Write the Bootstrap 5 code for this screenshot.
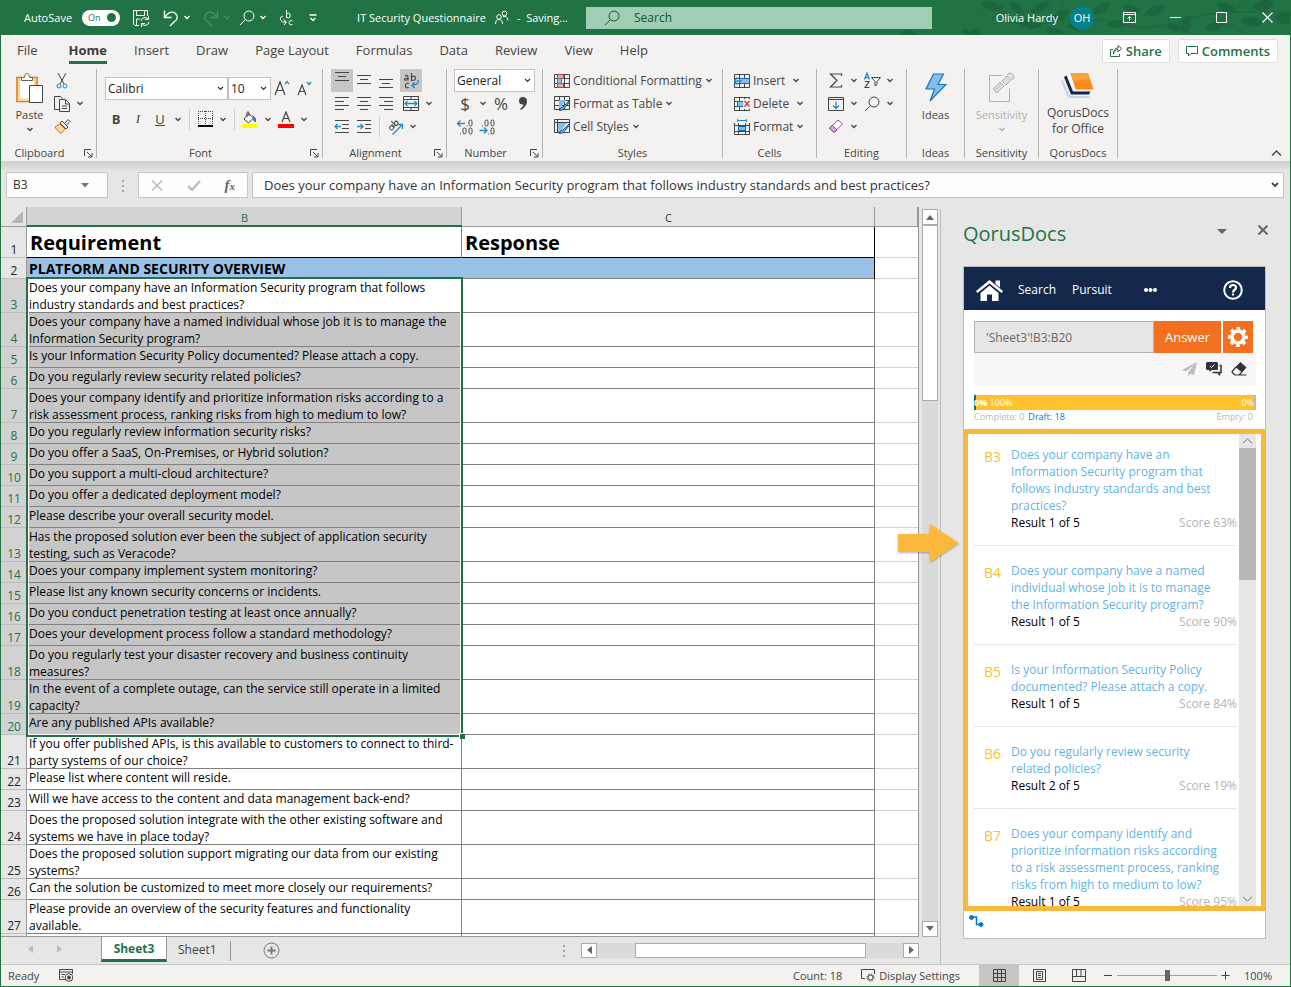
<!DOCTYPE html>
<html lang="en">
<head>
<meta charset="utf-8">
<meta name="viewport" content="width=device-width, initial-scale=1">
<title>IT Security Questionnaire</title>
<link href="https://cdn.jsdelivr.net/npm/bootstrap@5.3.0/dist/css/bootstrap.min.css" rel="stylesheet">
<style>
:root{--xl:#217346;--ink:#444;--ribbon:#f3f2f1;--chrome:#e6e6e6;--line:#808080}
body{font-family:"Open Sans","Noto Sans",sans-serif;font-size:12px;line-height:16px;color:var(--ink);background:var(--chrome)}
button{background:none;border:0;padding:0;color:inherit;font:inherit;line-height:inherit}
svg{display:block;flex:none;fill:none;stroke:currentColor}
svg.solid,.sb svg{fill:currentColor;stroke:none}
svg.flat{stroke:none}
.app{border:1px solid var(--xl);border-top:0}
.titlebar{height:35px;background:var(--xl);color:#fff;font-size:11px}
.titlebar .leaves{top:0;right:0}
.title-left{width:585px;padding-left:23px}
.title-right{width:358px}
.toggle{width:38px;height:16px;border-radius:8px;background:#fff;color:var(--xl);font-size:9px;padding:0 4px 0 6px}
.toggle i{width:9px;height:9px;border-radius:50%;background:var(--xl)}
.chev{width:14px}
.gap-s{margin-left:12px}
.searchbox{height:22px;background:#a0cdb4;color:#0f5a2e;gap:12px}
.searchbox input{background:none;border:0;outline:0;color:inherit;font-size:12px;width:100%;padding:0}
.searchbox input::placeholder{color:#0f5a2e;opacity:1}
.avatar{width:24px;height:24px;border-radius:50%;background:#038387}
.winbtn{width:46px;height:35px}
.ribbon{background:var(--ribbon)}
.tabs{height:32px;padding:0 12px 0 16px;font-size:13px}
.tabs nav{gap:27px}
.tabs nav a{color:var(--ink);text-decoration:none;line-height:22px;border-bottom:3px solid transparent;border-top:1px solid transparent}
.tabs nav a.on{font-weight:700;border-bottom-color:var(--xl);color:#3b3b3b}
.tabs .pill{height:24px;background:#fff;border:1px solid #e1dfdd;border-radius:2px;color:var(--xl);font-weight:600;padding:0 7px;gap:4px}
.groups{height:94px;padding-top:2px}
.grp{height:89px;border-right:1px solid #b5b3b1}
.grp-body{height:69px}
.grp-name{height:12px;line-height:16px;margin-top:7px;font-size:11px;text-align:center;position:relative}
.grp-name.more{padding-right:18px}
.grp-name svg{position:absolute;right:3px;top:4px}
.rw{height:23px;display:flex;align-items:center}
.ib{width:22px;height:23px;display:flex;align-items:center;justify-content:center}
.ib.on{background:#c8c6c4}
.vsep{width:1px;height:21px;background:#d2d0ce}
.combo{appearance:none;height:23px;border:1px solid #c3c1bf;border-radius:0;padding:0 0 0 2px;color:#222;font-size:12px;background:#fff url("data:image/svg+xml,%3Csvg xmlns='http://www.w3.org/2000/svg' width='7' height='5'%3E%3Cpath d='M1 1l2.500 2.500L6 1' fill='none' stroke='%23333' stroke-width='1.200'/%3E%3C/svg%3E") no-repeat right 3px center}
.cmd{display:flex;align-items:center;gap:3px}
.big{display:flex;flex-direction:column;align-items:center}
.fbar{height:47px;padding:11px 6px 0 5px;background:linear-gradient(#cdcdcd,#e6e6e6 11px)}
.fbox{height:26px;background:#fdfdfd;border:1px solid #c6c6c6}
.fbox input{background:none;border:0;outline:0;color:#333;padding:0;min-width:0}
.main{min-height:0}
.sheet{color:#000}
.gridwrap{border-right:1px solid #999;border-bottom:1px solid #999;background:#fff;overflow:hidden}
.grid{table-layout:fixed;width:100%;border-collapse:separate;border-spacing:0;line-height:17px}
.grid th,.grid td{padding:0;vertical-align:top;white-space:nowrap}
.grid td{padding-left:2px;box-shadow:inset -1px -1px var(--line);height:21px}
.grid td:last-child{box-shadow:inset 0 -1px #d4d4d4}
.grid tbody th{background:var(--chrome);font-weight:400;color:#222;vertical-align:bottom;text-align:center;box-shadow:inset -1px 0 #999,inset 0 -1px #bdbdbd}
.grid thead th{height:20px;background:var(--chrome);font-weight:400;text-align:center;vertical-align:middle;box-shadow:inset -1px -1px #999;color:#333;font-size:11px}
.grid thead th.hot{background:#d2d2d2;color:var(--xl);box-shadow:inset 0 -2px var(--xl),inset -1px 0 #999}
.grid tr.r1 td{height:31px;line-height:31px;font-size:20px;font-weight:700;padding-left:3px;box-shadow:inset -1px 0 var(--line),inset 0 -1px #000}
.grid tr.r1 td:nth-child(3){box-shadow:inset -1px -1px #000}
.grid tr.r1 td:last-child{box-shadow:inset 0 -1px #d4d4d4}
.grid tr.r2 td{font-size:14px;font-weight:700;line-height:21px}
.grid tr.r2 td:not(:last-child){background:#9bc2e6;box-shadow:inset 0 -1px var(--line)}
.grid tr.r2 td:nth-child(3){box-shadow:inset -1px 0 #000,inset 0 -1px var(--line)}
.picked{position:relative}
.grid .picked th{background:#d2d2d2;color:var(--xl)}
.picked td:nth-child(2){background:#c6c6c6}
.picked tr:first-child td:nth-child(2){background:#fff}
.frame{position:absolute;left:25px;top:-2px;bottom:-2px;width:437px;border:2px solid var(--xl);box-shadow:inset 0 0 0 1px #fff;pointer-events:none}
.frame::after{content:"";position:absolute;right:-4px;bottom:-4px;width:6px;height:6px;background:var(--xl);border:1px solid #fff;border-width:1px 0 0 1px}
.track{background:#dadada}
.sb{width:16px;height:16px;background:#fff;border:1px solid #ababab;color:#666;display:flex;align-items:center;justify-content:center;flex:none}
.thumb{background:#fff;border:1px solid #ababab}
.vbar{width:16px;margin:2px 2px 0 3px}
.sheettabs{height:28px}
.stab{width:66px;height:25px;background:#fff;border:1px solid #999;border-width:0 1px 0 1px;border-bottom:3px solid var(--xl);color:var(--xl);font-weight:700;line-height:24px}
.hbar{width:338px;height:15px;margin:6px 21px 0 0}
.pane{width:350px;border-left:1px solid #bdbdbd;margin-top:2px;padding:0 24px 25px 22px}
.pane h1{font-size:20px;line-height:26px;font-weight:400;color:var(--xl);margin:0}
.pane-head{height:57px;padding-top:12px}
.panel{background:#fff;border:1px solid #bdbdbd}
.pnav{height:43px;background:#14284b;color:#fff;padding:3px 22px 0 12px}
.pnav a{color:#fff;text-decoration:none}
.query{padding:11px 12px 0 10px}
.query input{height:32px;border:1px solid #b3b3b3;background:#e6e6e6;color:#666;padding:0 0 0 11px;border-radius:0;min-width:0}
.hot-btn{height:32px;background:#f37021;color:#fff;font-size:13px}
.tools{height:32px;background:#f7f7f7;margin:0 9px 0 10px;padding-right:9px;gap:9px;color:#333}
.meter{height:15px;margin:10px 9px 0 10px;background:#ffc22d;border-left:2px solid var(--xl);border-right:2px solid #bbb;color:#fff;font-size:9px;line-height:15px}
.legend{margin:0 12px 0 10px;font-size:9px;line-height:14px;color:#b9b9b9;height:19px}
.results{border:5px solid #fbb83c;margin:0 -1px;height:482px;padding-left:6px;padding-right:5px}
.hits{overflow:hidden;padding-right:2px}
.hit{border-bottom:1px solid #e6e6e6;padding:16px 0 14px 10px;line-height:17px;display:flex}
.hit:first-child{padding-top:12px}
.hit b{font-weight:400;font-size:14px;color:#fdc02f;width:27px;line-height:21px;flex:none}
.hit a{color:#5fb4e5;text-decoration:none;display:block;white-space:nowrap}
.hit .fine{color:#000}
.hit .fine span:last-child{color:#b3b3b3}
.rail{width:17px;background:#e6e6e6;color:#777}
.rail .grab{height:132px;background:#b8b8b8}
.pane-foot{height:25px;padding:4px 0 0 5px;color:#0078d7}
.status{height:22px;background:var(--ribbon);border-top:1px solid #c6c6c6;font-size:11px}
.view{width:40px;height:21px;display:flex;align-items:center;justify-content:center}
.view.on{background:#c8c6c4}
.zoomer{appearance:none;width:100px;height:11px;margin:0;background:linear-gradient(#a19f9d,#a19f9d) center/100% 1px no-repeat}
.zoomer::-webkit-slider-thumb{appearance:none;width:5px;height:11px;background:#666}
.arrow{left:896px;top:522px;z-index:5;filter:drop-shadow(0 1px 1px rgba(0,0,0,.3))}
.faded{color:#b1afad}
</style>
</head>
<body>
<svg width="0" height="0" class="position-absolute" aria-hidden="true">
<symbol id="cv" viewBox="0 0 8 5"><path d="M1.500 1L4 3.500L6.500 1" stroke-width="1.300"/></symbol>
<symbol id="ln" viewBox="0 0 9 9"><path d="M.5 7V.5H7M3 3l4.500 4.500M8 4v4H4"/></symbol>
<symbol id="mg" viewBox="0 0 18 18"><circle cx="11" cy="7" r="5"/><path d="M7.500 10.500L2 16"/></symbol>
<symbol id="tb" viewBox="0 0 16 14"><path d="M.5.5h15v13H.5zM.5 4.500h15M.5 9.500h15M5.500.5v13M10.500.5v13"/></symbol>
</svg>
<div class="app d-flex flex-column vh-100 position-relative overflow-hidden">

<header class="titlebar d-flex align-items-center position-relative">
  <svg class="leaves position-absolute" width="430" height="35" viewBox="0 0 430 35" style="color:#1d6540"><g fill="currentColor" stroke="none"><path d="M120 3q14-6 24 6q-14 6-24-6zM150 1q14 2 14 14q-14-2-14-14zM170 12q8-12 20-10q-6 14-20 10zM158 22q14-6 24 4q-12 8-24-4zM190 20q6-12 20-10q-4 14-20 10zM186 28q14-2 20 6h-16zM206 26q14-8 24 0q-10 10-24 0zM232 14q4-12 18-12q-4 14-18 12zM246 24q12-8 22 0q-10 8-22 0zM112 28q8 0 8 7h-10zM102 30q6-4 10 4h-10zM284 14q10-12 22-8q-6 14-22 8zM262 6q12-4 18 6q-12 4-18-6zM330 14q4 14-6 20q-8-12 6-20zM344 28q10-10 20-4q-6 12-20 4zM356 4q14-4 22 8q-16 4-22-8zM380 20q14-8 24 2q-12 10-24-2zM392 8q8-12 22-6q-6 14-22 6zM306 24q10-4 16 6q-12 4-16-6zM414 16q8-6 16-2v10q-12 2-16-8zM40 33q10-8 16 2h-14z"/></g><path d="M118 12q40 18 76 10t70 4q40 4 60-6t104-8M190 22q10-10 14-20M262 25q14-10 20-18M350 18q20 6 36 16M370 15q10-8 14-14"/></svg>
  <div class="title-left d-flex align-items-center position-relative">
    <span style="width:50px">AutoSave</span>
    <button class="toggle d-flex align-items-center justify-content-between ms-2" aria-label="AutoSave on">On<i></i></button>
    <button class="gap-s" aria-label="Save"><svg width="18" height="18" viewBox="0 0 18 18"><path d="M7 16.500H3L1.500 15V1.500h14V7M4.500 1.500v5h8v-5M4.500 16v-6H8M9 12a4 4 0 0 1 7-2M16.500 7v3.500H13M17 13a4 4 0 0 1-7 2M9.500 18v-3.500H13"/></svg></button>
    <button class="gap-s" aria-label="Undo"><svg width="18" height="18" viewBox="0 0 18 18"><path d="M2.500 1.500v7h7M3 8q5-7 10-4q5 5-1 9l-4 4" stroke-width="1.400"/></svg></button>
    <svg class="chev" height="5"><use href="#cv"/></svg>
    <button class="ms-2" aria-label="Redo" style="color:#4c8f69"><svg width="18" height="18" viewBox="0 0 18 18"><path d="M15.500 1.500v7h-7M15 8q-5-7-10-4q-5 5 1 9l4 4" stroke-width="1.400"/></svg></button>
    <svg class="chev" height="5" style="color:#4c8f69"><use href="#cv"/></svg>
    <button class="ms-1" aria-label="Find"><svg width="18" height="18"><use href="#mg"/></svg></button>
    <svg class="chev" height="5"><use href="#cv"/></svg>
    <button class="ms-2" aria-label="Replace"><svg width="18" height="18" viewBox="0 0 18 18"><path d="M8.500 1v8M8.500 5q2-2 3.500 0v3q-1.500 2-3.500 0M14.500 12q-3-1.500-3.500 1.500q.5 3.500 3.500 2M5 7q-4 1-2.500 4T8 13M5.500 10.500L8.500 13L6 16"/></svg></button>
    <button class="gap-s" aria-label="Customize toolbar"><svg width="10" height="8" viewBox="0 0 10 8"><path d="M1.500 1h7M2.500 4L5 6.500L7.500 4" stroke-width="1.300"/></svg></button>
    <span class="text-nowrap ms-auto">IT Security Questionnaire</span>
    <svg class="ms-2" width="15" height="15" viewBox="0 0 15 15"><circle cx="5" cy="7" r="2.300"/><path d="M1.500 14q0-4.500 3.500-4.500T8.500 14"/><circle cx="10.500" cy="3.500" r="2.300"/><path d="M9 6.500q4.500-1 5 4"/></svg>
    <span class="text-nowrap ms-2" style="margin-right:18px">-&nbsp; Saving...</span>
  </div>
  <label class="searchbox d-flex align-items-center flex-grow-1 position-relative px-3">
    <svg width="20" height="18"><use href="#mg"/></svg><input type="text" placeholder="Search" aria-label="Search">
  </label>
  <div class="title-right d-flex align-items-center justify-content-end position-relative">
    <span>Olivia Hardy</span>
    <span class="avatar gap-s d-flex align-items-center justify-content-center">OH</span>
    <button class="winbtn gap-s d-flex align-items-center justify-content-center" aria-label="Ribbon display options"><svg width="13" height="11" viewBox="0 0 13 11"><path d="M.5.5h12v10H.5zM.5 2.500h12M6.500 9V4.500M4.500 6.500l2-2l2 2"/></svg></button>
    <button class="winbtn d-flex align-items-center justify-content-center" aria-label="Minimize"><svg width="11" height="11"><path d="M0 5.500h11"/></svg></button>
    <button class="winbtn d-flex align-items-center justify-content-center" aria-label="Maximize"><svg width="11" height="11"><path d="M.5.5h10v10H.5z"/></svg></button>
    <button class="winbtn d-flex align-items-center justify-content-center" aria-label="Close"><svg width="11" height="11"><path d="M.5.5l10 10M10.500.5l-10 10" stroke-width="1.200"/></svg></button>
  </div>
</header>

<section class="ribbon">
  <div class="tabs d-flex align-items-center justify-content-between">
    <nav class="d-flex" aria-label="Ribbon tabs"><a href="#">File</a><a href="#" class="on ms-1">Home</a><a href="#">Insert</a><a href="#">Draw</a><a href="#">Page Layout</a><a href="#">Formulas</a><a href="#">Data</a><a href="#">Review</a><a href="#">View</a><a href="#">Help</a></nav>
    <div class="d-flex gap-2">
      <button class="pill d-flex align-items-center"><svg width="12" height="12" viewBox="0 0 12 12"><path d="M3 4.500H.5v7h9V9M3.500 9Q4 4.500 8 4.500V7l3.500-3.500L8 .5V3Q3.500 3 3.500 9z"/></svg>Share</button>
      <button class="pill d-flex align-items-center"><svg width="12" height="12" viewBox="0 0 12 12"><path d="M.5 1.500h11v7H5L2.500 11V8.500h-2z"/></svg>Comments</button>
    </div>
  </div>

  <div class="groups d-flex">
    <div class="grp" style="width:96px">
      <div class="grp-body d-flex">
        <button class="big" style="width:57px;padding-top:4px"><svg width="28" height="30" viewBox="0 0 28 30"><path d="M1 4.500h20v24H1z" fill="#fff" stroke="#dd7410" stroke-width="1.500"/><path d="M3 6.500h16v20H3z" stroke="#f8d68d" stroke-width="2"/><path d="M5.500 7.500V4.500h3q0-4 2.500-4t2.500 4h3v3z" fill="#fff" stroke="#666"/><path d="M13.500 12.500h13v17h-13z" fill="#fff" stroke="#444"/></svg><span class="mt-1 text-center" style="font-size:11px">Paste</span><svg class="mt-1" width="8" height="5"><use href="#cv"/></svg></button>
        <div style="margin-left:-7px">
          <button class="rw ib" aria-label="Cut"><svg width="12" height="16" viewBox="0 0 12 16"><path d="M2 0l6 11M10 0L4 11"/><circle cx="3" cy="13" r="2" stroke="#2488c9"/><circle cx="9" cy="13" r="2" stroke="#2488c9"/></svg></button>
          <div class="rw"><button class="ib" aria-label="Copy"><svg width="16" height="16" viewBox="0 0 16 16"><path d="M5 13.500H.5V.5h6l2 2M5.500 3.500h6l4 4v8h-10zM11.500 4v4h4M8 10h5M8 12.500h5"/></svg></button><svg class="chev" height="5"><use href="#cv"/></svg></div>
          <button class="rw ib" aria-label="Format painter"><svg width="17" height="15" viewBox="0 0 17 15"><path d="M1 8l5-3l5 5l-4 4.500q-2-1-3-3q-2-1-3-3.500z" fill="#fbd9a6" stroke="#dd7410"/><path d="M6 4l2-2l6 6l-2 2zM11 4l3-3.500l2 2L12.500 6" fill="#fff"/></svg></button>
        </div>
      </div>
      <div class="grp-name more">Clipboard<svg width="9" height="9"><use href="#ln"/></svg></div>
    </div>

    <div class="grp" style="width:226px">
      <div class="grp-body" style="padding:8px 0 0 8px">
        <div class="rw"><select class="combo" aria-label="Font" style="width:123px"><option>Calibri</option></select><select class="combo" aria-label="Font size" style="width:43px"><option>10</option></select>
          <button class="ib" aria-label="Grow font"><svg width="16" height="18" viewBox="0 0 16 18"><path d="M1 15L6 2l5 13M3 10.500h6" stroke-width="1.200"/><path d="M11 4l2-2.500L15 4" stroke="#2488c9" stroke-width="1.300"/></svg></button>
          <button class="ib" aria-label="Shrink font"><svg width="16" height="18" viewBox="0 0 16 18"><path d="M2 15L6 5l4 10M3.500 11.500h5" stroke-width="1.200"/><path d="M11 2l2 2.500L15 2" stroke="#2488c9" stroke-width="1.300"/></svg></button></div>
        <div class="d-flex align-items-center" style="height:30px;margin-top:4px;font-size:13px">
          <button class="ib"><strong>B</strong></button><button class="ib" style="font-family:'Liberation Serif',serif"><em>I</em></button><button class="ib"><u>U</u></button><svg class="chev" height="5"><use href="#cv"/></svg>
          <span class="vsep mx-1"></span>
          <button class="ib" aria-label="Borders"><svg width="15" height="16" viewBox="0 0 15 16"><path d="M.5 0v14M7.500 0v14M14.500 0v14M0 .5h15M0 7.500h15" stroke-dasharray="1 1"/><path d="M0 15h15" stroke="#000" stroke-width="2"/></svg></button><svg class="chev" height="5"><use href="#cv"/></svg>
          <span class="vsep ms-1"></span>
          <button class="ib ms-1" aria-label="Fill color"><svg width="16" height="17" viewBox="0 0 16 17"><path d="M6.500 2.500l5 4.500l-5 5L2 8zM5 6V1.500q1-1.500 2 0V5"/><path d="M11 5q3 1 2.500 6q-2-1-2-4" fill="#2a6fa8" stroke="#2a6fa8"/><path d="M0 15h16" stroke="#ff0" stroke-width="4"/></svg></button><svg class="chev" height="5"><use href="#cv"/></svg>
          <button class="ib" aria-label="Font color"><svg width="16" height="17" viewBox="0 0 16 17"><path d="M4 11L8 1l4 10M5.500 7.500h5" stroke-width="1.200"/><path d="M0 15h16" stroke="red" stroke-width="4"/></svg></button><svg class="chev" height="5"><use href="#cv"/></svg>
        </div>
      </div>
      <div class="grp-name more">Font<svg width="9" height="9"><use href="#ln"/></svg></div>
    </div>

    <div class="grp" style="width:124px">
      <div class="grp-body" style="padding-left:8px">
        <div class="rw"><button class="ib on" aria-label="Top align"><svg width="16" height="19"><path d="M1 1.500h14M4 5.500h8M1 9.500h14"/></svg></button><button class="ib" aria-label="Middle align"><svg width="16" height="19"><path d="M1 4.500h14M4 8.500h8M1 12.500h14"/></svg></button><button class="ib" aria-label="Bottom align"><svg width="16" height="19"><path d="M1 8.500h14M4 12.500h8M1 16.500h14"/></svg></button>
          <button class="ib on" aria-label="Wrap text" style="margin-left:3px"><svg width="16" height="18" viewBox="0 0 16 18"><path d="M2 4q3-1.500 3 1v3.500M5 6Q1.500 6 1.500 7.500T5 7.500M8.500 1v8M8.500 5q4-2 4 1t-4 2M6 11.500q-3-1-3.500 2t3.500 2" stroke-width="1.200"/><path d="M15 8q1 5-6 5M11.500 10.500L9 13l2.500 3" stroke="#2488c9" stroke-width="1.500"/></svg></button></div>
        <div class="rw"><button class="ib" aria-label="Align left"><svg width="16" height="15"><path d="M1 1.500h14M1 5.500h9M1 9.500h14M1 13.500h9"/></svg></button><button class="ib" aria-label="Center"><svg width="16" height="15"><path d="M1 1.500h14M4 5.500h8M1 9.500h14M4 13.500h8"/></svg></button><button class="ib" aria-label="Align right"><svg width="16" height="15"><path d="M1 1.500h14M6 5.500h9M1 9.500h14M6 13.500h9"/></svg></button>
          <button class="ib" aria-label="Merge and center" style="margin-left:3px"><svg width="16" height="15" viewBox="0 0 16 15"><path d="M.5.5h15v14H.5zM.5 3.500h15M.5 11.500h15M8 .5v3M8 11.500v3"/><path d="M2 7.500h12M4.500 5L2 7.500L4.500 10M11.500 5L14 7.500L11.500 10" stroke="#2488c9" stroke-width="1.300"/></svg></button><svg class="chev" height="5"><use href="#cv"/></svg></div>
        <div class="rw"><button class="ib" aria-label="Decrease indent"><svg width="16" height="13" viewBox="0 0 16 13"><path d="M1 .5h14M8 4.500h7M8 8.500h7M1 12.500h14"/><path d="M1 6.500h6M3.500 4L1 6.500L3.500 9" stroke="#2488c9" stroke-width="1.300"/></svg></button><button class="ib" aria-label="Increase indent"><svg width="16" height="13" viewBox="0 0 16 13"><path d="M1 .5h14M9 4.500h6M9 8.500h6M1 12.500h14"/><path d="M1 6.500h6M4.500 4L7 6.500L4.500 9" stroke="#2488c9" stroke-width="1.300"/></svg></button><span class="vsep mx-1"></span><button class="ib" aria-label="Orientation"><svg width="17" height="16" viewBox="0 0 17 16"><g transform="rotate(-45 6 6)"><circle cx="3" cy="7" r="2"/><path d="M5.500 4.500V9M7.500 2v7"/><circle cx="9.500" cy="7" r="2"/></g><path d="M5.500 15.500L15 6M11 5.500h4.500V10" stroke="#2488c9" stroke-width="1.300"/></svg></button><svg class="chev" height="5"><use href="#cv"/></svg></div>
      </div>
      <div class="grp-name more">Alignment<svg width="9" height="9"><use href="#ln"/></svg></div>
    </div>

    <div class="grp" style="width:96px">
      <div class="grp-body" style="padding-left:7px">
        <div class="rw"><select class="combo" aria-label="Number format" style="width:81px"><option>General</option></select></div>
        <div class="rw" style="font-size:17px"><button class="ib">$</button><svg class="chev" height="5"><use href="#cv"/></svg><button class="ib">%</button><button class="ib" aria-label="Comma style"><svg class="solid" width="10" height="15" viewBox="0 0 10 15"><path d="M5 1q4 0 4 4.500T3 14l-1-1q3-2 3.500-4.500Q1 9 1 5t4-4z"/></svg></button></div>
        <div class="rw"><button class="ib" aria-label="Increase decimal"><svg width="16" height="16" viewBox="0 0 16 16"><path d="M.5 4.500H8M3.500 1.500l-3 3l3 3" stroke="#2488c9" stroke-width="1.300"/><rect x="12" y="1" width="3" height="6" rx="1.500"/><rect x="6" y="9" width="3" height="6" rx="1.500"/><rect x="12" y="9" width="3" height="6" rx="1.500"/><path d="M9.500 7h1M3 15h1"/></svg></button><button class="ib" aria-label="Decrease decimal"><svg width="16" height="16" viewBox="0 0 16 16"><path d="M.5 11.500H8M5 8.500l3 3l-3 3" stroke="#2488c9" stroke-width="1.300"/><rect x="6" y="1" width="3" height="6" rx="1.500"/><rect x="12" y="1" width="3" height="6" rx="1.500"/><rect x="12" y="9" width="3" height="6" rx="1.500"/><path d="M3 7h1M9.500 15h1"/></svg></button></div>
      </div>
      <div class="grp-name more">Number<svg width="9" height="9"><use href="#ln"/></svg></div>
    </div>

    <div class="grp" style="width:180px">
      <div class="grp-body" style="padding-left:11px">
        <div class="rw"><button class="cmd"><svg width="16" height="14" viewBox="0 0 16 14"><use href="#tb" width="16" height="14"/><path d="M3.500.5h6v4h-6zM3.500 9.500h6v4h-6z" fill="#f4a6a6" stroke="#d13438"/><path d="M3.500 4.500h4v5h-4z" fill="#83beec" stroke="#2488c9"/></svg>Conditional Formatting<svg width="8" height="5"><use href="#cv"/></svg></button></div>
        <div class="rw"><button class="cmd"><svg width="16" height="15" viewBox="0 0 16 15"><use href="#tb" width="16" height="14"/><path d="M5 4h7L6 12H5z" fill="#83beec" stroke="none"/><path d="M15.500 4.500L9 11q-3 0-3.500 3.500q4 0 5-2.500l5-6z" fill="#83beec" stroke="#0f4c81"/></svg>Format as Table<svg width="8" height="5"><use href="#cv"/></svg></button></div>
        <div class="rw"><button class="cmd"><svg width="16" height="15" viewBox="0 0 16 15"><path d="M.5.5h15v13H.5zM.5 3.500h15M3.500.5v13"/><path d="M4 4h9l-7 9H4z" fill="#83beec" stroke="none"/><path d="M15.500 4.500L9 11q-3 0-3.500 3.500q4 0 5-2.500l5-6z" fill="#83beec" stroke="#0f4c81"/></svg>Cell Styles<svg width="8" height="5"><use href="#cv"/></svg></button></div>
      </div>
      <div class="grp-name">Styles</div>
    </div>

    <div class="grp" style="width:94px">
      <div class="grp-body" style="padding-left:11px">
        <div class="rw"><button class="cmd"><svg width="16" height="14" viewBox="0 0 16 14"><use href="#tb" width="16" height="14"/><path d="M5.500 4.500h10v5h-10z" fill="#83beec" stroke="#0f6cbd"/><path d="M0 7h8M3.500 3.500L0 7l3.500 3.500" stroke="#2488c9" stroke-width="1.500"/></svg>Insert<svg class="ms-1" width="8" height="5"><use href="#cv"/></svg></button></div>
        <div class="rw"><button class="cmd"><svg width="16" height="14" viewBox="0 0 16 14"><use href="#tb" width="16" height="14"/><path d="M3.500 4.500h6v5h-6z" fill="#83beec" stroke="#0f6cbd"/><path d="M9 2h7v10H9z" fill="#f3f2f1" stroke="none"/><path d="M10.500 4l5 5.500M15.500 4l-5 5.500" stroke="#d13438" stroke-width="1.300"/></svg>Delete<svg class="ms-1" width="8" height="5"><use href="#cv"/></svg></button></div>
        <div class="rw"><button class="cmd"><svg width="16" height="16" viewBox="0 0 16 16"><path d="M.5 4v11.500h15V4M.5 6.500h15M.5 12.500h15M4.500 4v11.500M11.500 4v11.500"/><path d="M4.500 7.500h7v4h-7z" fill="#83beec" stroke="#0f6cbd"/><path d="M3 1.500h10M3.500 0v3M12.500 0v3" stroke="#2488c9"/></svg>Format<svg width="8" height="5"><use href="#cv"/></svg></button></div>
      </div>
      <div class="grp-name">Cells</div>
    </div>

    <div class="grp" style="width:90px">
      <div class="grp-body" style="padding-left:8px">
        <div class="rw"><button class="ib" aria-label="AutoSum"><svg width="14" height="15" viewBox="0 0 14 15"><path d="M12.500 3V1H1.500L8 7.500L1.500 14h11v-2" stroke-width="1.200"/></svg></button><svg class="chev" height="5"><use href="#cv"/></svg><button class="ib" aria-label="Sort and filter"><svg width="17" height="17" viewBox="0 0 17 17"><path d="M.5 7.500L3 1l2.500 6.500M1.500 5.500h3" stroke="#2488c9" stroke-width="1.300"/><path d="M1 9.500h4L1 15.500h4.500" stroke-width="1.200"/><path d="M7.500 5.500h9L13 9.500v3L11 14V9.500z"/></svg></button><svg class="chev" height="5"><use href="#cv"/></svg></div>
        <div class="rw"><button class="ib" aria-label="Fill"><svg width="16" height="14" viewBox="0 0 16 14"><path d="M.5.5h15v13H.5zM.5 2.500h15"/><path d="M8 4.500v7M5 8.500l3 3l3-3" stroke="#2488c9" stroke-width="1.300"/></svg></button><svg class="chev" height="5"><use href="#cv"/></svg><button class="ib" aria-label="Find and select"><svg width="18" height="18"><use href="#mg"/></svg></button><svg class="chev" height="5"><use href="#cv"/></svg></div>
        <div class="rw"><button class="ib" aria-label="Clear"><svg width="16" height="15" viewBox="0 0 16 15"><path d="M10 1l4.500 4L6 13.500L1.500 9z" fill="#fff" stroke="#9b3fa5"/><path d="M4.500 6.500l4.500 4.500l-3 2.500L1.500 9z" fill="#dba4e0" stroke="#9b3fa5"/></svg></button><svg class="chev" height="5"><use href="#cv"/></svg></div>
      </div>
      <div class="grp-name">Editing</div>
    </div>

    <div class="grp" style="width:58px">
      <div class="grp-body"><button class="big w-100" style="padding-top:4px;font-size:11px"><svg width="22" height="30" viewBox="0 0 22 30"><path d="M8.500 1h10l-5.500 10.500h8L5 28l4.500-12H1z" fill="#83beec" stroke="#1a75bb" stroke-width="1.200"/></svg><span class="mt-1">Ideas</span></button></div>
      <div class="grp-name">Ideas</div>
    </div>
    <div class="grp" style="width:74px">
      <div class="grp-body"><button class="big w-100 faded" disabled style="padding-top:3px;font-size:11px"><svg width="28" height="31" viewBox="0 0 28 31"><path d="M14 3.500H1.500v26h20v-13"/><path d="M5 17l7-7l4 4l-7 7zM14 9l5-5l4 4l-5 5zM19 3l2-2q5 0 5 5l-2 2M7.500 18l6-6" fill="#e1dfdd"/></svg><span class="mt-1">Sensitivity</span><svg class="mt-1" width="8" height="5"><use href="#cv"/></svg></button></div>
      <div class="grp-name">Sensitivity</div>
    </div>
    <div class="grp" style="width:79px">
      <div class="grp-body"><button class="big w-100 text-nowrap" style="padding-top:4px;font-size:12px"><svg class="flat" width="34" height="26" viewBox="0 0 34 26"><path d="M0 8l2-1l7 16h20v2H7z" fill="#c9d6ea"/><path d="M3 4l2.500-1.500L12 18.500h17.500l-1.500 3H10z" fill="#10264d"/><path d="M7 2.500L9 1l6 16h-2z" fill="#fff"/><path d="M9.500 0H27l5.500 16.500h-18z" fill="#f98a1c"/><path d="M9.500 0H27l2 6L12 8z" fill="#fca43c"/></svg><span style="margin-top:6px">QorusDocs<br>for Office</span></button></div>
      <div class="grp-name">QorusDocs</div>
    </div>
    <button class="ms-auto align-self-end mb-1 me-2" aria-label="Collapse ribbon"><svg width="11" height="7"><path d="M1 5.500L5.500 1L10 5.500" stroke-width="1.300"/></svg></button>
  </div>
</section>

<section class="fbar d-flex align-items-start">
  <label class="fbox d-flex align-items-center flex-shrink-0" style="width:102px;padding-left:6px"><input type="text" value="B3" aria-label="Name box" class="w-100"><svg class="solid" width="8" height="5" style="margin-right:18px;color:#777"><path d="M0 0h8L4 4.500z"/></svg></label>
  <svg class="solid align-self-start mt-2" width="2" height="12" style="margin:0 14px;color:#a6a6a6"><path d="M0 0h2v2H0zM0 5h2v2H0zM0 10h2v2H0z"/></svg>
  <div class="fbox d-flex align-items-center justify-content-around me-1 flex-shrink-0" style="width:110px">
    <button style="color:#bbb" aria-label="Cancel"><svg width="12" height="11"><path d="M1 .5l10 10M11 .5L1 10.500" stroke-width="1.500"/></svg></button>
    <button style="color:#bbb" aria-label="Enter"><svg width="14" height="11"><path d="M1 6l4 4L13 1" stroke-width="2.300"/></svg></button>
    <button aria-label="Insert function" style="font:italic 700 15px 'Liberation Serif',serif;color:#666">f<span style="font-size:11px">x</span></button>
  </div>
  <label class="fbox d-flex align-items-center flex-grow-1 pe-1" style="padding-left:11px"><input type="text" class="flex-grow-1" style="font-size:13px" aria-label="Formula" value="Does your company have an Information Security program that follows industry standards and best practices?"><svg width="8" height="6"><path d="M1 1l3 3l3-3" stroke-width="1.800"/></svg></label>
</section>

<div class="main d-flex flex-grow-1">
  <div class="d-flex flex-column flex-grow-1 sheet" style="min-width:0">
    <div class="d-flex flex-grow-1" style="min-height:0">
      <div class="gridwrap flex-grow-1">
      <table class="grid">
        <colgroup><col style="width:26px"><col style="width:435px"><col><col style="width:43px"></colgroup>
        <thead><tr><th scope="col" aria-label="Select all"><svg class="solid ms-auto me-1" width="12" height="12" style="color:#b5b5b5"><path d="M12 0v12H0z"/></svg></th><th scope="col" class="hot">B</th><th scope="col">C</th><th scope="col" aria-label="D"></th></tr></thead>
        <tbody>
        <tr class="r1"><th scope="row">1</th><td>Requirement</td><td>Response</td><td></td></tr>
        <tr class="r2"><th scope="row">2</th><td>PLATFORM AND SECURITY OVERVIEW</td><td></td><td></td></tr>
        </tbody>
        <tbody class="picked">
        <tr><th scope="row">3</th><td>Does your company have an Information Security program that follows<br>industry standards and best practices?<span class="frame"></span></td><td></td><td></td></tr>
        <tr><th scope="row">4</th><td>Does your company have a named individual whose job it is to manage the<br>Information Security program?</td><td></td><td></td></tr>
        <tr><th scope="row">5</th><td>Is your Information Security Policy documented? Please attach a copy.</td><td></td><td></td></tr>
        <tr><th scope="row">6</th><td>Do you regularly review security related policies?</td><td></td><td></td></tr>
        <tr><th scope="row">7</th><td>Does your company identify and prioritize information risks according to a<br>risk assessment process, ranking risks from high to medium to low?</td><td></td><td></td></tr>
        <tr><th scope="row">8</th><td>Do you regularly review information security risks?</td><td></td><td></td></tr>
        <tr><th scope="row">9</th><td>Do you offer a SaaS, On-Premises, or Hybrid solution?</td><td></td><td></td></tr>
        <tr><th scope="row">10</th><td>Do you support a multi-cloud architecture?</td><td></td><td></td></tr>
        <tr><th scope="row">11</th><td>Do you offer a dedicated deployment model?</td><td></td><td></td></tr>
        <tr><th scope="row">12</th><td>Please describe your overall security model.</td><td></td><td></td></tr>
        <tr><th scope="row">13</th><td>Has the proposed solution ever been the subject of application security<br>testing, such as Veracode?</td><td></td><td></td></tr>
        <tr><th scope="row">14</th><td>Does your company implement system monitoring?</td><td></td><td></td></tr>
        <tr><th scope="row">15</th><td>Please list any known security concerns or incidents.</td><td></td><td></td></tr>
        <tr><th scope="row">16</th><td>Do you conduct penetration testing at least once annually?</td><td></td><td></td></tr>
        <tr><th scope="row">17</th><td>Does your development process follow a standard methodology?</td><td></td><td></td></tr>
        <tr><th scope="row">18</th><td>Do you regularly test your disaster recovery and business continuity<br>measures?</td><td></td><td></td></tr>
        <tr><th scope="row">19</th><td>In the event of a complete outage, can the service still operate in a limited<br>capacity?</td><td></td><td></td></tr>
        <tr><th scope="row">20</th><td>Are any published APIs available?</td><td></td><td></td></tr>
        </tbody>
        <tbody>
        <tr><th scope="row">21</th><td>If you offer published APIs, is this available to customers to connect to third-<br>party systems of our choice?</td><td></td><td></td></tr>
        <tr><th scope="row">22</th><td>Please list where content will reside.</td><td></td><td></td></tr>
        <tr><th scope="row">23</th><td>Will we have access to the content and data management back-end?</td><td></td><td></td></tr>
        <tr><th scope="row">24</th><td>Does the proposed solution integrate with the other existing software and<br>systems we have in place today?</td><td></td><td></td></tr>
        <tr><th scope="row">25</th><td>Does the proposed solution support migrating our data from our existing<br>systems?</td><td></td><td></td></tr>
        <tr><th scope="row">26</th><td>Can the solution be customized to meet more closely our requirements?</td><td></td><td></td></tr>
        <tr><th scope="row">27</th><td>Please provide an overview of the security features and functionality<br>available.</td><td></td><td></td></tr>
        <tr><th></th><td></td><td></td><td></td></tr>
        </tbody>
      </table>
      </div>
      <div class="vbar d-flex flex-column track">
        <button class="sb" aria-label="Scroll up"><svg width="8" height="5"><path d="M0 5h8L4 0z"/></svg></button>
        <div class="thumb" style="height:176px"></div>
        <button class="sb mt-auto" aria-label="Scroll down"><svg width="8" height="5"><path d="M0 0h8L4 5z"/></svg></button>
      </div>
    </div>
    <div class="sheettabs d-flex align-items-start">
      <div class="d-flex align-items-center justify-content-center gap-4 pt-2" style="width:100px;padding-right:12px;color:#bbb"><svg class="solid" width="5" height="8"><path d="M5 0v8L0 4z"/></svg><svg class="solid" width="5" height="8"><path d="M0 0v8l5-4z"/></svg></div>
      <button class="stab">Sheet3</button>
      <button class="pe-2" style="line-height:26px;padding-left:11px;color:#444">Sheet1</button>
      <span style="width:1px;height:20px;margin:4px 0 0 5px;background:#999"></span>
      <button class="mt-1" style="margin-left:32px;padding-top:1px;color:#777" aria-label="New sheet"><svg width="17" height="17"><circle cx="8.500" cy="8.500" r="7.500"/><path d="M8.500 4.500v8M4.500 8.500h8" stroke-width="1.800"/></svg></button>
      <svg class="solid ms-auto mt-2 me-3" width="2" height="12" style="color:#a6a6a6"><path d="M0 0h2v2H0zM0 5h2v2H0zM0 10h2v2H0z"/></svg>
      <div class="hbar track d-flex align-items-center">
        <button class="sb" style="height:15px" aria-label="Scroll left"><svg width="5" height="8"><path d="M5 0v8L0 4z"/></svg></button>
        <div class="thumb h-100" style="margin-left:38px;width:231px"></div>
        <button class="sb ms-auto" style="height:15px" aria-label="Scroll right"><svg width="5" height="8"><path d="M0 0v8l5-4z"/></svg></button>
      </div>
    </div>
  </div>

  <aside class="pane d-flex flex-column flex-shrink-0">
    <div class="pane-head d-flex align-items-start">
      <h1>QorusDocs</h1>
      <button class="ms-auto mt-1 pt-1" aria-label="Pane options"><svg class="solid" width="10" height="5" style="color:#666"><path d="M0 0h10L5 5z"/></svg></button>
      <button class="mt-1" style="margin:0 -2px 0 31px;color:#666" aria-label="Close pane"><svg width="10" height="10"><path d="M.5.5l9 9M9.500.5l-9 9" stroke-width="2"/></svg></button>
    </div>
    <div class="panel flex-grow-1 d-flex flex-column" style="min-height:0">
      <nav class="pnav d-flex align-items-center flex-shrink-0" aria-label="QorusDocs">
        <a href="#" aria-label="Home"><svg class="solid" width="27" height="23" viewBox="0 0 27 23"><path d="M13.500 1L27 12l-1.500 2L13.500 4.500L1.500 14L0 12zM19.500 1.500H24v7l-4.500-3.500z"/><path d="M4.500 14l9-7.500l9 7.500V22H16v-6.500h-5V22H4.500z"/></svg></a>
        <a href="#" style="margin-left:15px">Search</a><a href="#" class="ms-3">Pursuit</a>
        <a href="#" aria-label="More" style="margin-left:32px"><svg class="solid" width="13" height="4"><circle cx="2" cy="2" r="2"/><circle cx="6.500" cy="2" r="2"/><circle cx="11" cy="2" r="2"/></svg></a>
        <a href="#" class="ms-auto" aria-label="Help"><svg width="20" height="20"><circle cx="10" cy="10" r="8.800" stroke-width="2"/><path d="M7 8q0-3 3-3t3 2.500q0 1.500-1.500 2.500T10 12.500M10 13.500v2" stroke-width="2.200"/></svg></a>
      </nav>
      <div class="query d-flex flex-shrink-0">
        <input type="text" class="flex-grow-1" value="'Sheet3'!B3:B20" aria-label="Range">
        <button class="hot-btn flex-shrink-0" style="width:67px">Answer</button>
        <button class="hot-btn flex-shrink-0 d-flex align-items-center justify-content-center" style="width:30px;margin-left:2px" aria-label="Settings"><svg width="20" height="20" viewBox="0 0 20 20"><circle cx="10" cy="10" r="6" stroke-width="3.600"/><circle cx="10" cy="10" r="8.600" stroke-width="2.800" stroke-dasharray="3.500 3.254" stroke-dashoffset="1.700"/></svg></button>
      </div>
      <div class="tools d-flex align-items-center justify-content-end flex-shrink-0">
        <svg class="solid" width="15" height="14" viewBox="0 0 15 14" style="color:#bbb"><path d="M15 0L0 8l4 1.500L12 3L6 10.500V14l2-2.500l4 1.500z"/></svg>
        <svg width="16" height="14" viewBox="0 0 16 14"><path d="M1.500 0h9Q12 0 12 1.500v5Q12 8 10.500 8H6l-2.500 2V8h-2Q0 8 0 6.500v-5Q0 0 1.500 0z" fill="currentColor" stroke="none"/><path d="M4 4l1.500 1.500L8.500 2.500" stroke="#fff"/><path d="M13.500 3.500H15v7h-1.500v2l-2-2H6.500" stroke-width="1.500"/></svg>
        <svg width="16" height="14" viewBox="0 0 16 14"><path d="M9.500.5L15 5.500L11 10L5 5z" fill="currentColor"/><path d="M5 5L1 9.500q0 1 3 3.500h4l3-3M8 13h7.500" stroke-width="1.200"/></svg>
      </div>
      <div class="meter d-flex justify-content-between flex-shrink-0"><span style="margin-left:-2px"><strong>0%</strong> 100%</span><span>0%</span></div>
      <div class="legend d-flex flex-shrink-0"><span>Complete: 0</span><span class="ms-1" style="color:#0078d7">Draft: 18</span><span class="ms-auto">Empty: 0</span></div>
      <div class="results d-flex flex-shrink-0">
        <div class="hits flex-grow-1">
          <div class="hit"><b>B3</b><div class="flex-grow-1"><a href="#">Does your company have an<br>Information Security program that<br>follows industry standards and best<br>practices?</a><div class="fine d-flex justify-content-between"><span>Result 1 of 5</span><span>Score 63%</span></div></div></div>
          <div class="hit"><b>B4</b><div class="flex-grow-1"><a href="#">Does your company have a named<br>individual whose job it is to manage<br>the Information Security program?</a><div class="fine d-flex justify-content-between"><span>Result 1 of 5</span><span>Score 90%</span></div></div></div>
          <div class="hit"><b>B5</b><div class="flex-grow-1"><a href="#">Is your Information Security Policy<br>documented? Please attach a copy.</a><div class="fine d-flex justify-content-between"><span>Result 1 of 5</span><span>Score 84%</span></div></div></div>
          <div class="hit"><b>B6</b><div class="flex-grow-1"><a href="#">Do you regularly review security<br>related policies?</a><div class="fine d-flex justify-content-between"><span>Result 2 of 5</span><span>Score 19%</span></div></div></div>
          <div class="hit"><b>B7</b><div class="flex-grow-1"><a href="#">Does your company identify and<br>prioritize information risks according<br>to a risk assessment process, ranking<br>risks from high to medium to low?</a><div class="fine d-flex justify-content-between"><span>Result 1 of 5</span><span>Score 95%</span></div></div></div>
        </div>
        <div class="rail d-flex flex-column align-items-stretch">
          <svg class="mx-auto my-1" width="11" height="6"><path d="M1 5L5.500 1L10 5"/></svg>
          <div class="grab"></div>
          <svg class="mx-auto mt-auto mb-1" width="11" height="6"><path d="M1 1l4.500 4L10 1"/></svg>
        </div>
      </div>
      <div class="pane-foot"><svg width="15" height="12" viewBox="0 0 15 12"><path d="M3 2h4.500v7.500H12" stroke-width="1.500"/><circle cx="2.500" cy="2.500" r="2" fill="currentColor"/><circle cx="12" cy="9.500" r="2" fill="currentColor"/></svg></div>
    </div>
  </aside>
</div>

<footer class="status d-flex align-items-center flex-shrink-0">
  <span style="margin-left:7px">Ready</span>
  <svg style="margin-left:20px" width="15" height="13" viewBox="0 0 15 13"><path d="M7 10.500H.5V.5h13V5M.5 3h13M2.500 5.500H6M2.500 8H5"/><circle cx="10" cy="8.500" r="3.800"/><circle cx="10" cy="8.500" r="1.500" fill="currentColor"/></svg>
  <span class="ms-auto">Count: 18</span>
  <button class="d-flex align-items-center gap-1" style="margin:0 19px"><svg width="14" height="13" viewBox="0 0 14 13"><path d="M4 9.500H.5V.5h13V5"/><circle cx="9.500" cy="8.500" r="2.500"/><circle cx="9.500" cy="8.500" r="3.500" stroke-dasharray="1.500 1.250"/></svg>Display Settings</button>
  <button class="view on" aria-label="Normal"><svg width="13" height="13"><path d="M.5.5h12v12H.5zM.5 4.500h12M.5 8.500h12M4.500.5v12M8.500.5v12"/></svg></button>
  <button class="view" aria-label="Page layout"><svg width="13" height="13"><path d="M.5.5h12v12H.5zM3.500 2.500h6v8h-6zM5 4.500h3M5 6.500h3M5 8.500h3"/></svg></button>
  <button class="view" aria-label="Page break preview"><svg width="14" height="13"><path d="M.5.5h13v12H.5zM4.500.5v7h4.500v-7M.5 7.500h13"/></svg></button>
  <button class="ms-1 me-1" aria-label="Zoom out"><svg width="10" height="9"><path d="M1 4.500h8"/></svg></button>
  <input class="zoomer" type="range" min="10" max="190" value="100" aria-label="Zoom">
  <button class="ms-1" style="margin-right:14px" aria-label="Zoom in"><svg width="9" height="9"><path d="M.5 4.500h8M4.500.5v8"/></svg></button>
  <span style="margin-right:18px">100%</span>
</footer>

<svg class="arrow flat position-absolute" width="64" height="42" viewBox="0 0 64 42"><path d="M1 12h32V2l29 19L33 40V30H1z" fill="#fbb83c"/></svg>
</div>
<script src="https://cdn.jsdelivr.net/npm/bootstrap@5.3.0/dist/js/bootstrap.bundle.min.js"></script>
</body>
</html>
